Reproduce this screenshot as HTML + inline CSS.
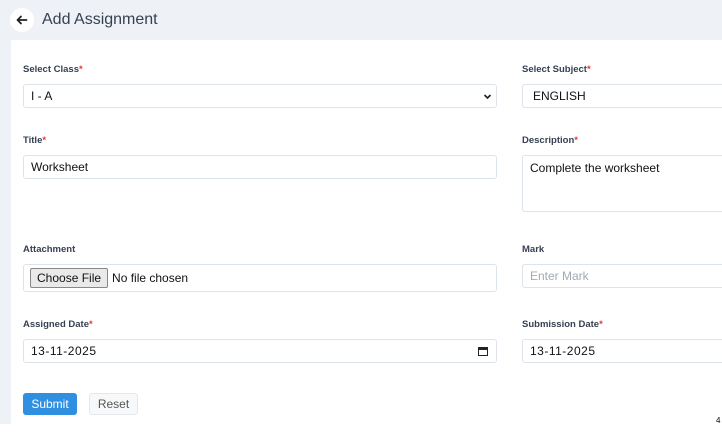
<!DOCTYPE html>
<html><head><style>
*{box-sizing:border-box;margin:0;padding:0}
body{width:722px;height:434px;overflow:hidden;background:#fff;font-family:"Liberation Sans",sans-serif;position:relative}
.top{position:absolute;left:0;top:0;width:722px;height:40px;background:#eef2f6}
.side{position:absolute;left:0;top:40px;width:11px;height:384px;background:#eef2f6}
.back{position:absolute;left:10px;top:8px;width:24px;height:24px;border-radius:50%;background:#fff}
.title{position:absolute;left:42px;top:11px;font-size:16px;color:#364152}
.lbl{position:absolute;font-size:9.5px;font-weight:bold;color:#364152}
.lbl i{color:#e53935;font-style:normal}
.in{position:absolute;border:1px solid #dde3ea;border-radius:3px;background:#fff;font-size:12px;color:#111;padding-left:7px;display:flex;align-items:center}
.btn{position:absolute;font-size:12px;border-radius:3px;text-align:center}
</style></head><body>
<div class="top"><div class="back"><svg width="24" height="24" viewBox="0 0 24 24"><path d="M16.5 12H7.5M11 8.5L7.5 12L11 15.5" stroke="#222" stroke-width="1.8" fill="none" stroke-linecap="round" stroke-linejoin="round"/></svg></div><div class="title">Add Assignment</div></div>
<div class="side"></div>
<div class="lbl" style="left:23px;top:64px">Select Class<i>*</i></div>
<div class="in" style="left:23px;top:84px;width:474px;height:24px">I - A<svg style="position:absolute;right:4px;top:8px" width="9" height="7" viewBox="0 0 9 7"><path d="M1.5 2L4.5 5L7.5 2" stroke="#222" stroke-width="1.6" fill="none"/></svg></div>
<div class="lbl" style="left:522px;top:64px">Select Subject<i>*</i></div>
<div class="in" style="left:522px;top:84px;width:210px;height:24px;padding-left:10px">ENGLISH</div>
<div class="lbl" style="left:23px;top:135px">Title<i>*</i></div>
<div class="in" style="left:23px;top:155px;width:474px;height:24px">Worksheet</div>
<div class="lbl" style="left:522px;top:135px">Description<i>*</i></div>
<div class="in" style="left:522px;top:155px;width:210px;height:57px;align-items:flex-start;padding-top:5px">Complete the worksheet</div>
<div class="lbl" style="left:23px;top:244px">Attachment</div>
<div class="in" style="left:23px;top:264px;width:474px;height:28px;padding-left:6px"><span style="border:1px solid #888;background:#e9e9e9;border-radius:2px;padding:2px 6px;margin-right:4px">Choose File</span>No file chosen</div>
<div class="lbl" style="left:522px;top:244px">Mark</div>
<div class="in" style="left:522px;top:264px;width:210px;height:24px;color:#a0aab6">Enter Mark</div>
<div class="lbl" style="left:23px;top:319px">Assigned Date<i>*</i></div>
<div class="in" style="left:23px;top:339px;width:474px;height:24px;letter-spacing:.5px">13-11-2025<span style="position:absolute;right:8px;top:7px;width:10px;height:9px;border:1.5px solid #222;border-top-width:3px"></span></div>
<div class="lbl" style="left:522px;top:319px">Submission Date<i>*</i></div>
<div class="in" style="left:522px;top:339px;width:210px;height:24px;letter-spacing:.5px">13-11-2025</div>
<div class="btn" style="left:23px;top:393px;width:54px;height:22px;line-height:22px;background:#2f8fe0;color:#fff">Submit</div>
<div class="btn" style="left:89px;top:393px;width:49px;height:22px;line-height:20px;background:#f6f8fa;border:1px solid #e3e8ee;color:#555">Reset</div>
<div style="position:absolute;left:716px;top:416px;font-size:8px">4</div>
</body></html>
